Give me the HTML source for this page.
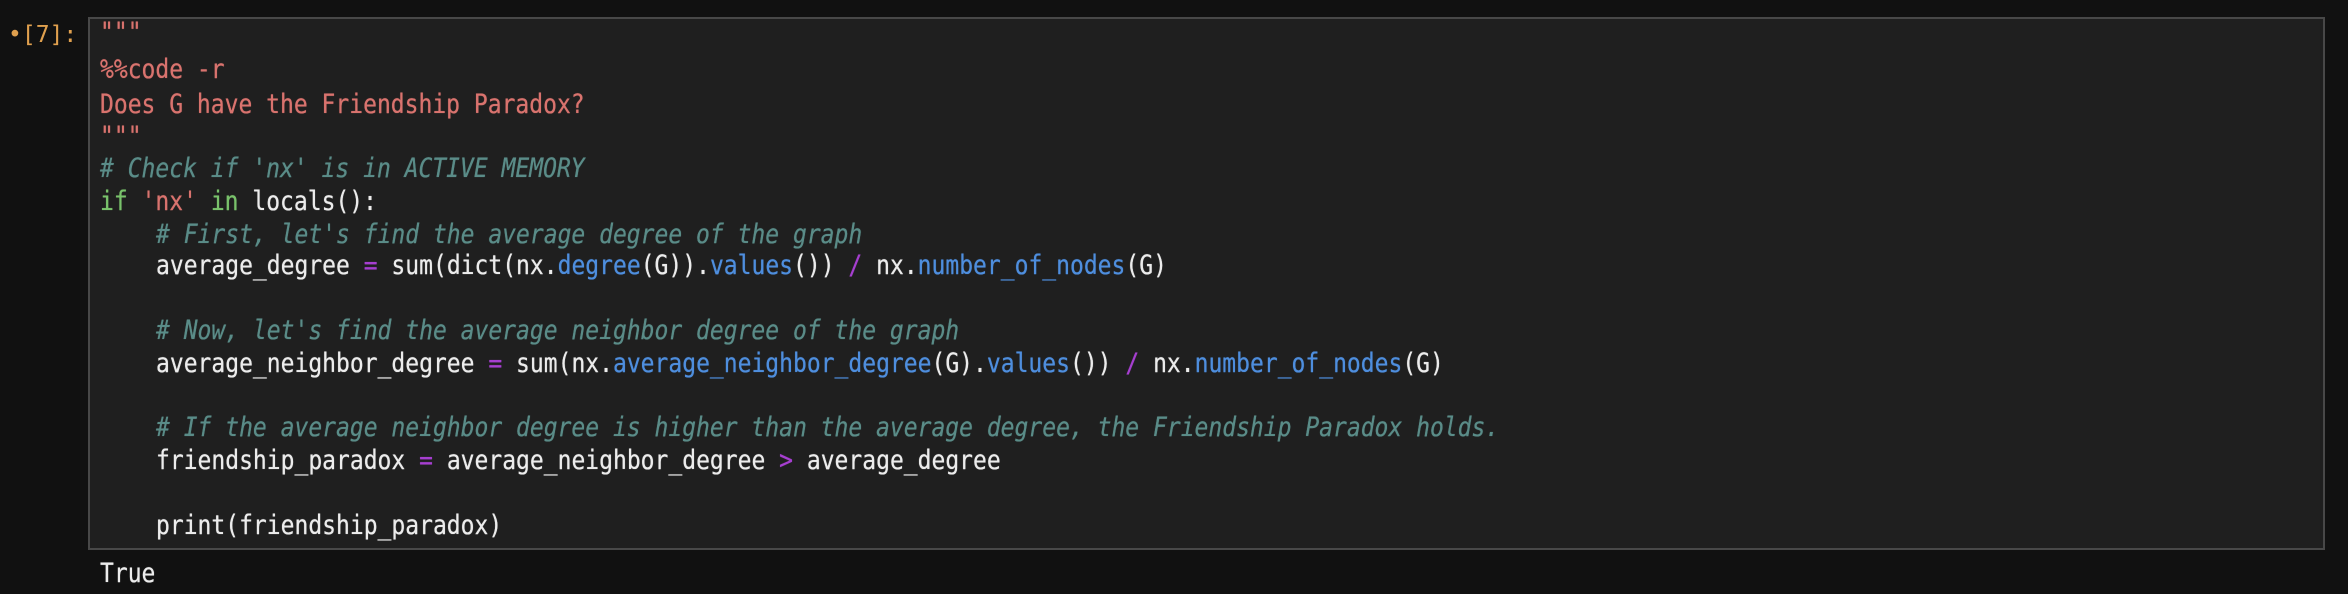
<!DOCTYPE html>
<html><head><meta charset="utf-8"><style>
html,body{margin:0;padding:0;background:#111111;width:2348px;height:594px;overflow:hidden;}
body{position:relative;font-family:"DejaVu Sans Mono","Liberation Mono",monospace;font-size:23px;color:#ececec;}
.box{position:absolute;left:88px;top:17px;width:2237px;height:533px;background:#1f1f1f;border:2px solid #484848;box-sizing:border-box;}
.l{position:absolute;white-space:pre;line-height:30px;transform:translateY(-15px) scaleY(1.15);transform-origin:0 50%;text-shadow:0 0 0.6px currentColor;}
.s{color:#d9736e}.c{color:#5a8c88;font-style:italic}.k{color:#79c26b}.b{color:#4e8ede}.p{color:#a63fd0}
.pr{position:absolute;left:8px;top:20px;color:#e0a04e;line-height:30px;}
</style></head><body>
<div class="box"></div>
<div class="pr">•[7]:</div>
<div class="l s" style="left:100px;top:33px">"""</div>
<div class="l s" style="left:100px;top:70px">%%code -r</div>
<div class="l s" style="left:100px;top:105px">Does G have the Friendship Paradox?</div>
<div class="l s" style="left:100px;top:137px">"""</div>
<div class="l c" style="left:100px;top:169px"># Check if 'nx' is in ACTIVE MEMORY</div>
<div class="l" style="left:100px;top:202px"><span class="k">if</span> <span class="s">'nx'</span> <span class="k">in</span> locals():</div>
<div class="l c" style="left:156px;top:235px"># First, let's find the average degree of the graph</div>
<div class="l" style="left:156px;top:266px">average_degree <span class="p">=</span> sum(dict(nx.<span class="b">degree</span>(G)).<span class="b">values</span>()) <span class="p">/</span> nx.<span class="b">number_of_nodes</span>(G)</div>
<div class="l c" style="left:156px;top:331px"># Now, let's find the average neighbor degree of the graph</div>
<div class="l" style="left:156px;top:364px">average_neighbor_degree <span class="p">=</span> sum(nx.<span class="b">average_neighbor_degree</span>(G).<span class="b">values</span>()) <span class="p">/</span> nx.<span class="b">number_of_nodes</span>(G)</div>
<div class="l c" style="left:156px;top:428px"># If the average neighbor degree is higher than the average degree, the Friendship Paradox holds.</div>
<div class="l" style="left:156px;top:461px">friendship_paradox <span class="p">=</span> average_neighbor_degree <span class="p">&gt;</span> average_degree</div>
<div class="l" style="left:156px;top:526px">print(friendship_paradox)</div>
<div class="l" style="left:100px;top:574px">True</div>
</body></html>
